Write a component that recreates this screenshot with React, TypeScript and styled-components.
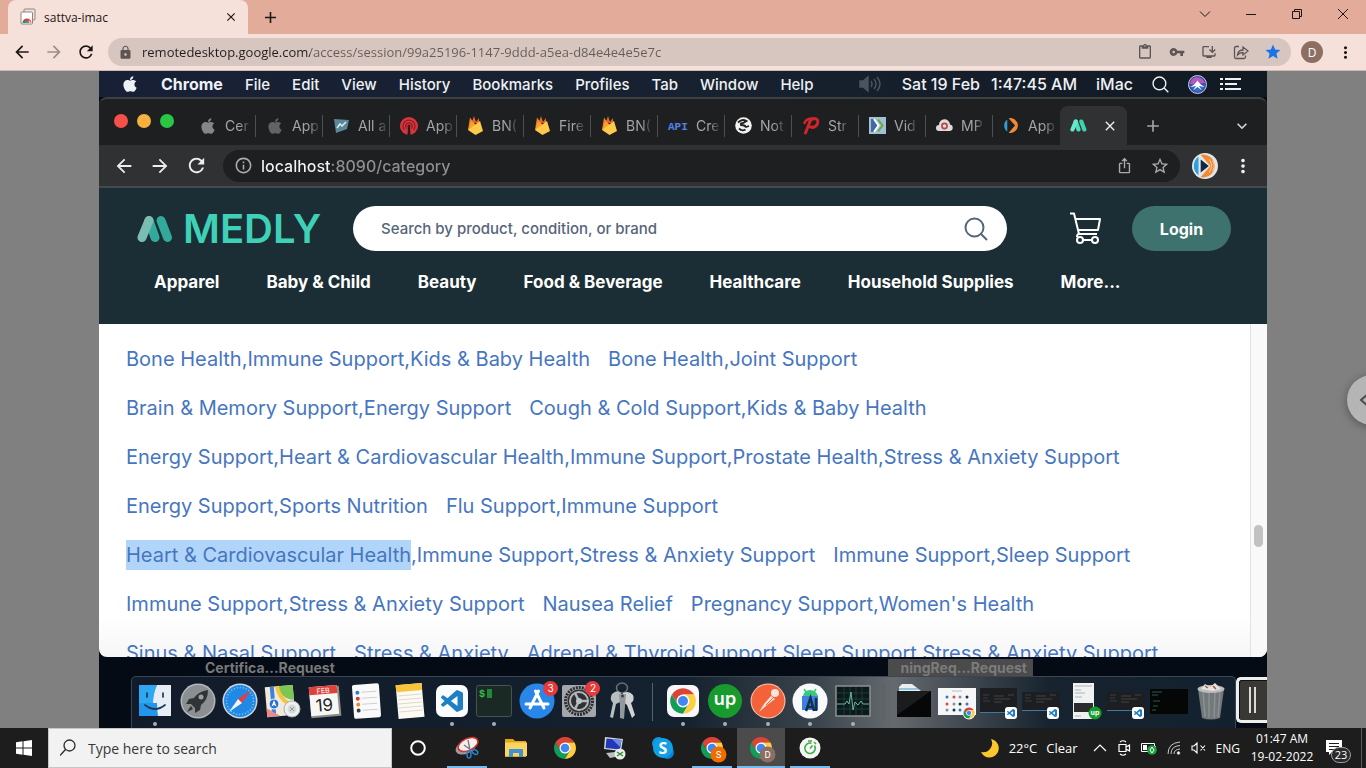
import React from "react";
import styled, { createGlobalStyle, css } from "styled-components";
import { FaApple } from "react-icons/fa";
import {
  MdArrowBack,
  MdArrowForward,
  MdRefresh,
  MdLock,
  MdStar,
  MdStarBorder,
  MdVpnKey,
  MdContentPaste,
  MdMoreVert,
  MdClose,
  MdAdd,
  MdInfoOutline,
  MdInstallDesktop,
  MdIosShare,
  MdExpandMore,
} from "react-icons/md";

const winFont = `"Open Sans", "Noto Sans", sans-serif`;
const macFont = `Inter, "Liberation Sans", sans-serif`;

const GlobalStyle = createGlobalStyle`
  * { box-sizing: border-box; }
  html, body { margin: 0; background: #808080; }
  body { font-family: ${winFont}; }
  button, input { font: inherit; color: inherit; border: 0; padding: 0; margin: 0; background: none; outline: none; }
  a { color: inherit; text-decoration: none; }
  svg { display: block; flex: none; }
`;

const Shell = styled.div`
  display: flex;
  flex-direction: column;
  height: 100vh;
  overflow: hidden;
`;

/* ---------- outer browser ---------- */

const TabStrip = styled.header`
  display: flex;
  align-items: stretch;
  height: 34px;
  padding-left: 8px;
  background: #e3ab99;
  color: #1c1716;
`;

const OuterTab = styled.div`
  display: flex;
  align-items: center;
  gap: 8px;
  width: 240px;
  padding: 0 10px 0 12px;
  border-radius: 8px 8px 0 0;
  background: #f6e1da;
  font-size: 12px;
`;

const TabName = styled.span`
  flex: 1;
`;

const IconButton = styled.button<{ $w?: number; $h?: number; $color?: string }>`
  display: flex;
  align-items: center;
  justify-content: center;
  width: ${(p) => p.$w ?? 32}px;
  height: ${(p) => p.$h ?? 32}px;
  color: ${(p) => p.$color ?? "inherit"};
  flex: none;
`;

const WindowControls = styled.div`
  display: flex;
  margin-left: auto;
`;

const OuterToolbar = styled.div`
  display: flex;
  align-items: center;
  height: 37px;
  padding: 0 4px 0 6px;
  background: #f6e1da;
  border-bottom: 1px solid #c9bab4;
  color: #1c1716;
`;

const OuterOmnibox = styled.div`
  display: flex;
  align-items: center;
  flex: 1;
  height: 28px;
  margin: 0 10px 0 6px;
  padding: 0 2px 0 10px;
  border-radius: 14px;
  background: #d7c6c0;
  color: #5c5553;
`;

const UrlField = styled.input<{ $split: number; $head: string; $tail: string }>`
  flex: 1;
  min-width: 0;
  color: transparent;
  background: linear-gradient(90deg, ${(p) => p.$head} ${(p) => p.$split}px, ${(p) => p.$tail} ${(p) => p.$split}px);
  background-clip: text;
  -webkit-background-clip: text;
`;

const OuterUrl = styled(UrlField)`
  margin-left: 9px;
  font-size: 13px;
`;

const ProfileBadge = styled.button`
  width: 22px;
  height: 22px;
  margin-right: 5px;
  border-radius: 50%;
  background: #8d6e63;
  color: #fff;
  font-size: 12px;
`;

/* ---------- remote screen ---------- */

const Stage = styled.main`
  position: relative;
  display: flex;
  flex: 1;
  min-height: 0;
  padding: 0 99px;
  overflow: hidden;
  background: #808080;
`;

const SideHandle = styled.button`
  position: absolute;
  right: -31px;
  top: 304px;
  display: flex;
  align-items: center;
  width: 50px;
  height: 50px;
  padding-left: 11px;
  border-radius: 50%;
  background: #b5b5b5;
  box-shadow: 0 2px 10px rgba(0, 0, 0, 0.35);
  color: #4c4c4c;
`;

const Remote = styled.div`
  display: flex;
  flex-direction: column;
  flex: 1;
  min-width: 0;
  background: #040b14;
  font-family: ${macFont};
  overflow: hidden;
`;

const MenuBar = styled.nav`
  display: flex;
  align-items: center;
  flex: none;
  height: 26px;
  padding: 0 26px 0 22px;
  background: linear-gradient(90deg, #182036, #182130 50%, #111a22);
  color: #eef1f5;
  font-size: 16px;
  font-weight: 500;
`;

const MenuList = styled.div`
  display: flex;
  align-items: center;
  gap: 22px;
  margin-left: 22px;
`;

const MenuItem = styled.button<{ $bold?: boolean }>`
  font-size: ${(p) => (p.$bold ? 16 : 15)}px;
  font-weight: ${(p) => (p.$bold ? 700 : 500)};
  white-space: nowrap;
`;

const MenuExtras = styled.div`
  display: flex;
  align-items: center;
  gap: 19px;
  margin-left: auto;
  white-space: nowrap;
`;

const MenuExtrasEnd = styled.div`
  display: flex;
  align-items: center;
  gap: 13px;
`;

const Clock = styled.span`
  display: flex;
  gap: 11px;
`;

const MacWindow = styled.section`
  display: flex;
  flex-direction: column;
  flex: 1;
  min-height: 0;
  border-top: 2px solid #3d4142;
  border-radius: 8px;
  overflow: hidden;
  background: #1e1f20;
`;

const MacTabs = styled.div`
  display: flex;
  align-items: flex-end;
  flex: none;
  height: 46px;
  padding: 0 9px 0 15px;
  color: #a3a5a6;
`;

const TrafficLights = styled.div`
  display: flex;
  align-items: center;
  gap: 9px;
  align-self: flex-start;
  height: 44px;
  width: 75px;
`;

const Light = styled.button<{ $color: string }>`
  width: 14px;
  height: 14px;
  border-radius: 50%;
  background: ${(p) => p.$color};
`;

const MacTab = styled.div`
  display: flex;
  align-items: center;
  flex: 0 1 67px;
  min-width: 0;
  height: 39px;
  padding-left: 10px;
  gap: 8px;
`;

const MacTabLabel = styled.span`
  white-space: nowrap;
  font-size: 14px;
  mask-image: linear-gradient(90deg, #000 60%, rgba(0, 0, 0, 0.2));
`;

const TabRule = styled.span`
  width: 1px;
  height: 22px;
  margin-left: -1px;
  margin-bottom: 8px;
  background: #4d4f50;
`;

const ActiveMacTab = styled.div`
  display: flex;
  align-items: center;
  justify-content: space-between;
  width: 67px;
  height: 39px;
  padding: 0 9px 0 10px;
  border-radius: 8px 8px 0 0;
  background: #2f3132;
  color: #f0f0f0;
`;

const NewTab = styled(IconButton)`
  margin-left: 10px;
  margin-right: auto;
`;

const MacToolbar = styled.div`
  display: flex;
  align-items: center;
  flex: none;
  height: 43px;
  padding-left: 6px;
  background: #2f3132;
  border-bottom: 2px solid #45494a;
  color: #eceeee;
`;

const MacOmnibox = styled.div`
  display: flex;
  align-items: center;
  flex: 1;
  height: 32px;
  margin: 0 12px 0 9px;
  padding: 0 2px 0 11px;
  border-radius: 16px;
  background: #1d1f20;
  color: #a9abac;
`;

const MacUrl = styled(UrlField)`
  margin-left: 8px;
  font-size: 16px;
  font-weight: 500;
`;

/* ---------- shop page ---------- */

const ShopHeader = styled.header`
  display: flex;
  flex-direction: column;
  flex: none;
  height: 136px;
  padding: 18px 36px 0 38px;
  background: #1b2e35;
  color: #fff;
`;

const HeaderRow = styled.div`
  display: flex;
  align-items: center;
`;

const Brand = styled.a`
  display: flex;
  align-items: center;
  gap: 10px;
  width: 216px;
  color: #3fd0b8;
  font-size: 40px;
  line-height: 44px;
  font-weight: 600;
`;

const SearchBox = styled.label`
  display: flex;
  align-items: center;
  flex: 1;
  height: 45px;
  padding: 0 19px 0 28px;
  border-radius: 23px;
  background: #fff;
  color: #566579;
`;

const SearchInput = styled.input`
  flex: 1;
  min-width: 0;
  font-size: 15px;
  font-weight: 500;
  &::placeholder { color: #566579; opacity: 1; }
`;

const CartButton = styled.button`
  margin: 0 30px 0 62px;
`;

const LoginButton = styled.button`
  width: 99px;
  height: 45px;
  border-radius: 23px;
  background: #3d726e;
  font-size: 16px;
  font-weight: 700;
`;

const CategoryNav = styled.nav`
  display: flex;
  gap: 47px;
  margin-top: 20px;
  padding-left: 17px;
  font-size: 17px;
  line-height: 22px;
  font-weight: 700;
  white-space: nowrap;
`;

const PageBody = styled.div`
  display: flex;
  flex: 1;
  min-height: 0;
  background: linear-gradient(#fff 88%, #f6f6f7);
`;

const LinkCloud = styled.div`
  display: flex;
  flex-wrap: wrap;
  align-content: flex-start;
  flex: 1;
  gap: 19px 18px;
  padding: 20px 26px 0 27px;
  overflow: hidden;
  color: #4676bf;
  font-size: 20px;
  line-height: 30px;
  font-weight: 400;
`;

const TopicLink = styled.a`
  white-space: nowrap;
`;

const Marked = styled.mark`
  display: inline-block;
  background: #b1d4f9;
  color: inherit;
`;

const ScrollTrack = styled.div`
  width: 17px;
  flex: none;
  padding: 201px 3px 0 3px;
  border-left: 1px solid #e2e2e2;
  background: #f9f9f9;
`;

const ScrollThumb = styled.div`
  width: 9px;
  height: 22px;
  border-radius: 5px;
  background: #c1c1c1;
`;

/* ---------- mac desktop and dock ---------- */

const DesktopStrip = styled.div`
  display: flex;
  align-items: flex-end;
  justify-content: space-between;
  flex: none;
  height: 19px;
  padding: 0 234px 0 106px;
  color: #77797b;
  font-size: 14px;
  line-height: 17px;
  font-weight: 700;
`;

const FileName = styled.span<{ $selected?: boolean }>`
  ${(p) =>
    p.$selected &&
    css`
      padding: 0 6px 0 13px;
      background: #4b4b4b;
      color: #7b7b7b;
    `}
`;

const DockRow = styled.div`
  display: flex;
  flex: none;
  height: 52px;
  padding-left: 32px;
`;

const Dock = styled.div`
  display: flex;
  flex: 1;
  padding: 0 3px 0 2px;
  border: 1px solid #3c4652;
  border-bottom: 0;
  border-radius: 5px 5px 0 0;
  background: linear-gradient(90deg, #121b2a, #14212e 50%, #3a444c 62%, #656a6e 69%, #4a5057 74%, #17242f 83%, #13202e);
`;

const DockSlot = styled.button<{ $running?: boolean }>`
  position: relative;
  display: flex;
  align-items: center;
  justify-content: center;
  flex: 1 1 0;
  min-width: 0;
  height: 47px;
  ${(p) =>
    p.$running &&
    css`
      &::after {
        content: "";
        position: absolute;
        bottom: -2px;
        left: 50%;
        width: 4px;
        height: 4px;
        margin-left: -2px;
        border-radius: 50%;
        background: #a9afb5;
      }
    `}
`;

const DockRule = styled.span`
  width: 1px;
  height: 38px;
  margin: 6px 9px 0;
  background: #57616b;
`;

const CountBadge = styled.span`
  position: absolute;
  top: 4px;
  right: 0;
  width: 15px;
  height: 15px;
  border-radius: 50%;
  background: #e5393c;
  color: #fff;
  font-size: 10px;
  line-height: 15px;
  text-align: center;
`;

const EdgePanel = styled.div`
  display: flex;
  align-items: center;
  justify-content: center;
  width: 31px;
  height: 46px;
  margin-top: 1px;
  flex: none;
  border: 3px solid #eceef0;
  border-right: 0;
  border-radius: 5px 0 0 5px;
  background: #3a3835;
  box-shadow: inset 1px 1px 0 #111;
`;

/* ---------- windows taskbar ---------- */

const Taskbar = styled.footer`
  display: flex;
  align-items: center;
  flex: none;
  height: 40px;
  background: #1d1d1d;
  color: #fff;
  font-size: 12px;
`;

const TaskSearch = styled.label`
  display: flex;
  align-items: center;
  gap: 12px;
  width: 344px;
  height: 40px;
  margin-right: 2px;
  padding: 0 11px;
  border: 1px solid #c6c6c6;
  background: #f2f2f2;
  color: #2b2b2b;
`;

const TaskSearchInput = styled.input`
  flex: 1;
  min-width: 0;
  font-size: 14px;
  &::placeholder { color: #383838; opacity: 1; }
`;

const TaskSlot = styled.button<{ $state?: "open" | "active" }>`
  position: relative;
  display: flex;
  align-items: center;
  justify-content: center;
  width: 48px;
  height: 40px;
  margin-right: 1px;
  background: ${(p) => (p.$state === "active" ? "#4b4b4b" : "none")};
  ${(p) =>
    p.$state &&
    css`
      &::after {
        content: "";
        position: absolute;
        bottom: 0;
        left: ${p.$state === "active" ? 0 : 4}px;
        right: ${p.$state === "active" ? 0 : 4}px;
        height: 2px;
        background: #76b9ed;
      }
    `}
`;

const Tray = styled.div`
  display: flex;
  align-items: center;
  margin-left: auto;
  height: 40px;
  padding-right: 4px;
`;

const Weather = styled.button`
  display: flex;
  align-items: center;
  gap: 9px;
  margin-right: 15px;
  font-size: 13px;
`;

const TrayIcons = styled.div`
  display: flex;
  align-items: center;
  gap: 10px;
`;

const TrayClock = styled.time`
  width: 66px;
  margin: 0 10px 0 9px;
  font-size: 12px;
  line-height: 18px;
  text-align: center;
`;

const Notice = styled.button`
  position: relative;
  width: 32px;
  height: 40px;
`;

const NoticeCount = styled.span`
  position: absolute;
  left: 6px;
  top: 19px;
  width: 20px;
  height: 16px;
  border: 1px solid #9c9c9c;
  border-radius: 8px;
  background: #2a2a2a;
  font-size: 11px;
  line-height: 14px;
  text-align: center;
`;

const ShowDesktop = styled.span`
  width: 1px;
  height: 40px;
  margin-left: 4px;
  background: #5a5a5a;
`;

/* ---------- drawings ---------- */

const ChromeLogo = ({ size = 22, badge, badgeColor }: { size?: number; badge?: string; badgeColor?: string }) => (
  <svg width={size} height={size} viewBox="0 0 48 48" overflow="visible">
    <path fill="#db4437" d="M24 24 24 13H43.05A22 22 0 0 0 4.95 13L14.47 29.5z" />
    <path fill="#0f9d58" d="M4.95 13A22 22 0 0 0 24 46L33.53 29.5H14.47z" />
    <path fill="#ffcd40" d="M43.05 13A22 22 0 0 1 24 46L33.53 29.5 24 13z" />
    <circle cx="24" cy="24" r="11" fill="#fff" />
    <circle cx="24" cy="24" r="8.6" fill="#4285f4" />
    {badge && (
      <>
        <circle cx="37" cy="37" r="16" fill={badgeColor} />
        <text x="37" y="44" fill="#fff" fontSize="19" textAnchor="middle" fontFamily="Roboto, sans-serif">{badge}</text>
      </>
    )}
  </svg>
);

const CodeMark = ({ size = 24 }: { size?: number }) => (
  <svg width={size} height={size} viewBox="0 0 24 24">
    <path
      fill="#1f7fc4"
      d="M23.15 2.587L18.21.21a1.494 1.494 0 0 0-1.705.29l-9.46 8.63-4.12-3.128a.999.999 0 0 0-1.276.057L.327 7.261A1 1 0 0 0 .326 8.74L3.899 12 .326 15.26a1 1 0 0 0 .001 1.479L1.65 17.94a.999.999 0 0 0 1.276.057l4.12-3.128 9.46 8.63a1.492 1.492 0 0 0 1.704.29l4.942-2.377A1.5 1.5 0 0 0 24 20.06V3.939a1.5 1.5 0 0 0-.85-1.352zm-5.146 14.861L10.826 12l7.178-5.448v10.896z"
    />
  </svg>
);

const MedlyMark = ({ w, h, bright }: { w: number; h: number; bright?: boolean }) => (
  <svg width={w} height={h} viewBox="0 0 36 28" strokeLinecap="round" strokeWidth="9">
    <path d="M24 5.500 30.500 22.500" stroke={bright ? "#3fd3ad" : "#33a99b"} />
    <path d="M12 5.500 18 22.500" stroke={bright ? "#4be0bb" : "#33a99b"} />
    <path d="M12 5.500 5 22.500" stroke={bright ? "#6be6c8" : "#7bbdb2"} />
  </svg>
);

const Firebase = () => (
  <svg width="17" height="19" viewBox="0 0 17 19">
    <path d="M1 14 3 1.5 7 7z" fill="#f58220" />
    <path d="M1 14 5 4 10 11z" fill="#f9a12e" />
    <path d="M5 6 7 0 9 6 12 2 12 8z" fill="#e8672a" />
    <path d="M1 14 13 5 16 15 8.500 19z" fill="#ffca4a" />
  </svg>
);

const PlayMark = ({ size = 17, ring }: { size?: number; ring?: boolean }) => (
  <svg width={size} height={size} viewBox="0 0 24 24">
    {ring && <circle cx="12" cy="12" r="12" fill="#dfe7ec" />}
    <path d="M8 1.800A10.500 10.500 0 1 1 8 22.200L17 12z" fill="#f28a35" />
    <path d="M6 3.500A10.500 10.500 0 0 0 6 20.500z" fill="#2f9fd8" />
    <path d="M8 6 15.500 12 8 18z" fill={ring ? "#16263f" : "#1e1f20"} />
    {ring && <path d="M16 6q4 6 0 12M19 7q3 5 0 10" stroke="#ffc58f" fill="none" />}
  </svg>
);

const SearchGlyph = ({ size, width = 2 }: { size: number; width?: number }) => (
  <svg width={size} height={size} viewBox="0 0 24 24" fill="none" stroke="currentColor" strokeWidth={width}>
    <circle cx="10.500" cy="10.500" r="9" />
    <path d="M17 17 23 23" />
  </svg>
);

const tabIcons: { label: string; icon: React.ReactNode }[] = [
  { label: "Cer", icon: <FaApple size={18} color="#858687" /> },
  { label: "App", icon: <FaApple size={18} color="#626364" /> },
  {
    label: "All a",
    icon: (
      <svg width="17" height="17" viewBox="0 0 17 17">
        <path d="M1 2 16 3 14 12 3 16z" fill="#5b8798" />
        <path d="M4 11 7 7 9 9 13 5" stroke="#d9edf2" strokeWidth="1.500" fill="none" />
      </svg>
    ),
  },
  {
    label: "App",
    icon: (
      <svg width="18" height="18" viewBox="0 0 18 18">
        <circle cx="9" cy="9" r="9" fill="#d8363c" />
        <path d="M4.500 13a6 6 0 1 1 9 0M6.700 11.500a3.300 3.300 0 1 1 4.600 0" stroke="#8f1c25" strokeWidth="1.300" fill="none" />
        <path d="M7.500 18 8 10h2l.500 8z" fill="#1e1f20" />
        <circle cx="9" cy="9" r="1.600" fill="#5b0f18" />
      </svg>
    ),
  },
  { label: "BN(", icon: <Firebase /> },
  { label: "Fire", icon: <Firebase /> },
  { label: "BN(", icon: <Firebase /> },
  {
    label: "Cre",
    icon: (
      <svg width="20" height="16" viewBox="0 0 20 16">
        <text x="0" y="12" fontFamily="Liberation Mono, monospace" fontSize="11" fontWeight="700" fill="#5580e6">API</text>
      </svg>
    ),
  },
  {
    label: "Not",
    icon: (
      <svg width="17" height="17" viewBox="0 0 17 17">
        <circle cx="8.500" cy="8.500" r="8.300" fill="#f2f2f2" />
        <path d="M3 5.500Q7 1.500 11.500 4L8 6Q5 6 6 8 10 8 11 10L14 9M4 11.500Q7 14.500 10.500 12.500" stroke="#222" strokeWidth="1.800" fill="none" />
      </svg>
    ),
  },
  {
    label: "Str",
    icon: (
      <svg width="18" height="19" viewBox="0 0 18 19" fill="none" stroke="#d0252b" strokeWidth="3" strokeLinecap="round">
        <path d="M3.500 17 7 8Q8.500 2.500 12.500 2.500 17 3 15.500 7.500 13.500 12.500 8.500 11" />
        <path d="M2.500 7Q4 2.500 11 2.500" strokeWidth="2.500" />
      </svg>
    ),
  },
  {
    label: "Vid",
    icon: (
      <svg width="17" height="17" viewBox="0 0 17 17">
        <path d="M0 0H17V17H0z" fill="#9fc0d6" />
        <path d="M2 2H6L10 8.500 6 15H2z" fill="#4668a0" />
        <path d="M5 2 9.500 8.500 5 15" stroke="#fff" strokeWidth="2" fill="none" />
        <path d="M9 2.500 13.500 8.500 9 14.500" stroke="#6ea83c" strokeWidth="2" fill="none" />
      </svg>
    ),
  },
  {
    label: "MP",
    icon: (
      <svg width="17" height="13" viewBox="0 0 17 13">
        <path d="M3 12a3 3 0 0 1 0-6 5.500 5.500 0 0 1 11-.5A3.300 3.300 0 0 1 14 12z" fill="#dcdcdc" />
        <circle cx="8.500" cy="7" r="2.600" stroke="#c2403c" strokeWidth="1.600" fill="none" />
      </svg>
    ),
  },
  { label: "App", icon: <PlayMark /> },
];

const Sheet = ({ rows }: { rows: string[] }) => (
  <>
    {rows.map((c, i) => (
      <g key={i}>
        <circle cx="9" cy={9 + i * 6} r="2" fill={c} />
        <path d={`M13 ${9 + i * 6}H28`} stroke="#d0d0d0" />
      </g>
    ))}
  </>
);

const EditorThumb = ({ wide }: { wide?: boolean }) => (
  <svg width="38" height="38" viewBox="0 0 38 38">
    <path d={wide ? "M0 6H37V31H0z" : "M0 10H38V29H0z"} fill="#1c1e21" />
    <path d={wide ? "M0 30.500H26" : "M0 28.500H26"} stroke="#3d7ba6" />
    <path d="M3 13H9M3 16H8M3 19H10" stroke="#393d42" />
    <path d="M14 14H24M14 17H30M14 20H22M28 13H34" stroke="#45423c" />
    <rect x="25" y="25" width="12" height="12" rx="3" fill="#fff" />
    <g transform="translate(27 27)"><CodeMark size={8} /></g>
  </svg>
);

type DockEntry = { name: string; running?: boolean; badge?: string; art: React.ReactNode };

const dockLeft: DockEntry[] = [
  {
    name: "Finder", running: true,
    art: (
      <svg width="34" height="34" viewBox="0 0 34 34">
        <path d="M1 1H33V32H1z" fill="#e6edf5" />
        <path d="M1 1H19Q15 10 15 19H19Q19 26 20 32H1z" fill="#2196ec" />
        <path d="M1 1H19Q15 10 15 19H1z" fill="#35b4f5" opacity=".6" />
        <path d="M9 9v4M25 9v4M7 21Q17 29 27 21" stroke="#1d3a55" strokeWidth="1.700" fill="none" strokeLinecap="round" />
      </svg>
    ),
  },
  {
    name: "Launchpad",
    art: (
      <svg width="36" height="36" viewBox="0 0 36 36">
        <circle cx="18" cy="18" r="17.500" fill="#b3b7ba" />
        <circle cx="18" cy="18" r="16" fill="#8b8f92" />
        <path d="M28 7Q19 8 14 15L9 16 6 21 11 21 15 25 15 30 20 27 21 22Q28 17 28 7z" fill="#2f3437" />
        <circle cx="21" cy="14" r="2.500" fill="#9b9fa3" />
        <path d="M11 23 7 29 13 26z" fill="#2f3437" />
      </svg>
    ),
  },
  {
    name: "Safari",
    art: (
      <svg width="36" height="36" viewBox="0 0 36 36">
        <circle cx="18" cy="18" r="17.500" fill="#c9d6e0" />
        <circle cx="18" cy="18" r="16" fill="#2089e6" />
        <circle cx="18" cy="18" r="13.500" fill="none" stroke="#8cc8f7" strokeWidth="1.500" strokeDasharray="1 2" />
        <path d="M29 7 16 16 20 20z" fill="#ec3b3b" />
        <path d="M7 29 16 16 20 20z" fill="#f3f3f3" />
      </svg>
    ),
  },
  {
    name: "Maps",
    art: (
      <svg width="38" height="36" viewBox="0 0 38 36">
        <g transform="rotate(-5 18 18)">
          <path d="M3 3H31V33H3z" fill="#f0ead8" />
          <path d="M16 3H31V18Q18 16 16 3z" fill="#7cc653" />
          <path d="M10 3V33" stroke="#3d82e0" strokeWidth="4" />
          <path d="M15 3Q18 20 31 24" stroke="#f6c445" strokeWidth="4" fill="none" />
          <path d="M3 24 16 33H3z" fill="#e98b8b" />
        </g>
        <circle cx="11" cy="21" r="5" fill="#2b72cf" stroke="#fff" />
        <path d="M8.500 23.500 11 17 13.500 23.500 11 22z" fill="#fff" />
        <circle cx="29" cy="26" r="8" fill="#eef1f1" stroke="#a6aeb0" />
        <circle cx="29" cy="26" r="4.500" fill="#d6dad9" />
        <path d="M27 24 31 28M31 24 27 28" stroke="#8d9697" />
      </svg>
    ),
  },
  {
    name: "Calendar",
    art: (
      <svg width="36" height="36" viewBox="0 0 36 36">
        <g transform="rotate(-5 18 18)">
          <path d="M3 4H33V34H3z" fill="#8d8d8a" />
          <path d="M3 3H31V32H3z" fill="#f7f7f5" />
          <path d="M3 3H31V11H3z" fill="#e0403a" />
          <text x="17" y="10" fontSize="7" fill="#fff" textAnchor="middle" fontFamily="Inter, sans-serif">FEB</text>
          <text x="17" y="28" fontSize="17" fill="#222" textAnchor="middle" fontFamily="Inter, sans-serif">19</text>
        </g>
      </svg>
    ),
  },
  {
    name: "Reminders",
    art: (
      <svg width="36" height="36" viewBox="0 0 36 36">
        <g transform="rotate(-4 18 18)">
          <rect x="4" y="1" width="27" height="34" rx="2" fill="#fafafa" />
          <Sheet rows={["#3477e0", "#d53a34", "#e88b2b", "#3f3f3f"]} />
        </g>
      </svg>
    ),
  },
  {
    name: "Notes",
    art: (
      <svg width="36" height="38" viewBox="0 0 36 38">
        <g transform="rotate(-5 18 18)">
          <path d="M5 2H31V36H5z" fill="#fcfaf3" />
          <path d="M5 2H31V9H5z" fill="#f8c43a" />
          <path d="M6 13H30M6 17H30M6 21H30M6 25H30M6 29H30" stroke="#dcdad2" />
        </g>
      </svg>
    ),
  },
  {
    name: "Code", running: true,
    art: (
      <svg width="34" height="34" viewBox="0 0 34 34">
        <rect x="1" y="1" width="32" height="32" rx="7" fill="#fbfcfd" />
        <g transform="translate(6 6)"><CodeMark size={22} /></g>
      </svg>
    ),
  },
  {
    name: "Terminal", running: true,
    art: (
      <svg width="36" height="34" viewBox="0 0 36 34">
        <rect x=".5" y="1.500" width="35" height="31" rx="2" fill="#1b2924" stroke="#49524f" />
        <text x="3" y="13" fontSize="10" fontWeight="700" fill="#36c14c" fontFamily="Liberation Mono, monospace">$</text>
        <path d="M11 5H16V14H11z" fill="#1f8a35" />
      </svg>
    ),
  },
  {
    name: "App Store", badge: "3",
    art: (
      <svg width="36" height="36" viewBox="0 0 36 36">
        <circle cx="18" cy="18" r="17.500" fill="#2a87ea" />
        <path d="M19.500 8 11 25M16.500 8 25 25M7 21H21M24 21H29" stroke="#fff" strokeWidth="3" strokeLinecap="round" />
      </svg>
    ),
  },
  {
    name: "Preferences", badge: "2",
    art: (
      <svg width="36" height="36" viewBox="0 0 36 36">
        <rect x="1" y="2" width="34" height="32" rx="2" fill="#a4a7a9" />
        <circle cx="18" cy="18" r="13.500" fill="none" stroke="#2c2e30" strokeWidth="3" strokeDasharray="2 1" />
        <circle cx="18" cy="18" r="11.500" fill="#2f3234" />
        <circle cx="18" cy="18" r="9" fill="none" stroke="#b4b7b9" strokeWidth="2" />
        <path d="M18 18 14 10M18 18 14 26M18 18H27" stroke="#b4b7b9" strokeWidth="2.500" />
        <circle cx="18" cy="18" r="3" fill="#c0c3c5" />
      </svg>
    ),
  },
  {
    name: "Keychain",
    art: (
      <svg width="30" height="38" viewBox="0 0 30 38">
        <ellipse cx="15" cy="6" rx="5.500" ry="5" fill="none" stroke="#6a7073" strokeWidth="1.500" />
        <path d="M5 12Q10 7 14 11L13 20 9 22 6 36 3 35 6 21Q2 17 5 12z" fill="#b9bec0" />
        <path d="M16 11Q22 8 26 13 28 18 24 21L28 33 25 36 20 23 15 19z" fill="#cfd3d4" />
        <path d="M12 12H19L18 24 17 37 13 36 13 24z" fill="#92989b" />
        <circle cx="15.500" cy="14" r="1.500" fill="#3c4245" />
      </svg>
    ),
  },
];

const dockMiddle: DockEntry[] = [
  {
    name: "Chrome", running: true,
    art: (
      <svg width="34" height="34" viewBox="0 0 34 34">
        <rect x="1" y="1" width="32" height="32" rx="7" fill="#f8f8f8" />
        <g transform="translate(3 3)"><ChromeLogo size={28} /></g>
      </svg>
    ),
  },
  {
    name: "Upwork", running: true,
    art: (
      <svg width="36" height="36" viewBox="0 0 36 36">
        <circle cx="18" cy="18" r="17" fill="#189b2d" />
        <text x="18" y="22" fontSize="18" fontWeight="600" fill="#fff" textAnchor="middle" fontFamily="Inter, sans-serif">up</text>
      </svg>
    ),
  },
  {
    name: "Postman", running: true,
    art: (
      <svg width="36" height="36" viewBox="0 0 36 36">
        <circle cx="18" cy="18" r="17.500" fill="#f6c7b4" />
        <circle cx="18" cy="18" r="16.500" fill="#f4623a" />
        <circle cx="25" cy="10" r="4" fill="#fbe4da" />
        <path d="M21 13 25 16 17 22 9 29 14 21z" fill="#fbe4da" />
        <path d="M24 14 16 22" stroke="#f4623a" />
      </svg>
    ),
  },
  {
    name: "Android Studio", running: true,
    art: (
      <svg width="36" height="36" viewBox="0 0 36 36">
        <circle cx="18" cy="18" r="17.500" fill="#f8f9fa" />
        <path d="M10 13H26V27H10z" fill="#3d7fe6" />
        <path d="M11 13Q12 7 18 7T26 13z" fill="#3ac97c" />
        <path d="M12 6 14 9M24 6 22 9" stroke="#3ac97c" strokeWidth="1.500" />
        <path d="M14 28 18.500 15 22 28M24 15V28M16 24H21" stroke="#14304a" strokeWidth="2.500" fill="none" />
      </svg>
    ),
  },
  {
    name: "Activity Monitor", running: true,
    art: (
      <svg width="36" height="34" viewBox="0 0 36 34">
        <rect x="1" y="2" width="34" height="30" fill="#0d1a1b" stroke="#8b9193" strokeWidth="1.500" />
        <path d="M2 9H34M2 15H34M2 25H34M9 3V31M15 3V31M21 3V31M27 3V31" stroke="#1c3a38" />
        <path d="M2 20H10L12 17 14 20 16 8 18 26 20 18 23 21 26 17 28 20H34" stroke="#6bb3a1" fill="none" />
      </svg>
    ),
  },
];

const dockRight: DockEntry[] = [
  {
    name: "Folder",
    art: (
      <svg width="36" height="36" viewBox="0 0 36 36">
        <path d="M3 4 6 1H16L25 8H3z" fill="#e9eef1" />
        <path d="M3 6H22" stroke="#3f9fd6" />
        <path d="M1 8H35V34H1z" fill="#060708" />
        <path d="M1 8H35L1 32z" fill="#1a1c1e" />
      </svg>
    ),
  },
  {
    name: "Browser window",
    art: (
      <svg width="38" height="38" viewBox="0 0 38 38" overflow="visible">
        <path d="M0 6H38V33H0z" fill="#f5f6f8" />
        <path d="M14 9H24" stroke="#b8bcc2" />
        {[15, 22, 28].map((y, r) =>
          [9, 16, 22, 29].map((x, c) => (
            <circle key={`${x}-${y}`} cx={x} cy={y} r="1.500" fill={["#3a75c4", "#d8493f", "#8a8f96", "#2b2f36"][(r + c) % 4]} />
          )),
        )}
        <circle cx="31" cy="31" r="6.500" fill="#f5f6f8" />
        <g transform="translate(25 25)"><ChromeLogo size={12} /></g>
      </svg>
    ),
  },
  { name: "Editor one", art: <EditorThumb wide /> },
  { name: "Editor two", art: <EditorThumb /> },
  {
    name: "Messages window",
    art: (
      <svg width="38" height="38" viewBox="0 0 38 38" overflow="visible">
        <path d="M8 1H29V37H8z" fill="#f0f1f1" />
        <path d="M10 4H27M10 8H16M10 11H20M10 15H17M10 34H16" stroke="#aeb2b3" />
        <path d="M9 21H28V30H9z" fill="#2c2c2e" />
        <circle cx="30" cy="31" r="6.500" fill="#189b2d" />
        <text x="30" y="33" fontSize="7" fontWeight="700" fill="#fff" textAnchor="middle" fontFamily="Inter, sans-serif">up</text>
      </svg>
    ),
  },
  { name: "Editor three", art: <EditorThumb /> },
  {
    name: "Terminal window",
    art: (
      <svg width="38" height="38" viewBox="0 0 38 38">
        <path d="M0 7H38V32H0z" fill="#050606" />
        <path d="M2 10H12M2 13H8M3 19H10M3 24H8M2 28H6" stroke="#2f5a4c" />
      </svg>
    ),
  },
  {
    name: "Bin",
    art: (
      <svg width="30" height="38" viewBox="0 0 30 38">
        <path d="M2 7H28L24 36Q15 39 6 36z" fill="#73787b" />
        <path d="M7 9 9 35M13 10V36M19 10 18 36M24 9 22 35" stroke="#8b9093" strokeWidth="1.500" />
        <ellipse cx="15" cy="7" rx="13.500" ry="4" fill="#b9bcbd" />
        <path d="M5 7 9 2 14 5 19 1 25 7 17 9z" fill="#e8e3de" />
        <path d="M9 4 12 6M17 4 20 7" stroke="#a65545" strokeWidth="1.500" />
      </svg>
    ),
  },
];

const DockGroup = ({ entries }: { entries: DockEntry[] }) => (
  <>
    {entries.map((e) => (
      <DockSlot key={e.name} aria-label={e.name} $running={e.running}>
        {e.art}
        {e.badge && <CountBadge>{e.badge}</CountBadge>}
      </DockSlot>
    ))}
  </>
);

const topics = [
  "Bone Health,Immune Support,Kids & Baby Health",
  "Bone Health,Joint Support",
  "Brain & Memory Support,Energy Support",
  "Cough & Cold Support,Kids & Baby Health",
  "Energy Support,Heart & Cardiovascular Health,Immune Support,Prostate Health,Stress & Anxiety Support",
  "Energy Support,Sports Nutrition",
  "Flu Support,Immune Support",
  "Heart & Cardiovascular Health,Immune Support,Stress & Anxiety Support",
  "Immune Support,Sleep Support",
  "Immune Support,Stress & Anxiety Support",
  "Nausea Relief",
  "Pregnancy Support,Women's Health",
  "Sinus & Nasal Support",
  "Stress & Anxiety",
  "Adrenal & Thyroid Support Sleep Support Stress & Anxiety Support",
];
const markedPrefix = "Heart & Cardiovascular Health";

const OuterBrowser = () => (
  <>
    <TabStrip>
      <OuterTab>
        <svg width="16" height="18" viewBox="0 0 16 18">
          <rect x="4" y="1" width="11" height="11" rx="1" fill="#f6e1da" stroke="#8b8583" />
          <rect x="1" y="4" width="11.500" height="12" rx="1" fill="#fff" stroke="#8b8583" />
          <path d="M2.500 15a4.500 4.500 0 0 1 9 0z" fill="#db4437" />
          <path d="M2.500 15 4.500 11.500 6 15z" fill="#0f9d58" />
          <path d="M9 12 11.500 15H8z" fill="#ffcd40" />
          <path d="M5 15a2 2 0 0 1 4 0z" fill="#4285f4" />
        </svg>
        <TabName>sattva-imac</TabName>
        <MdClose size={14} />
      </OuterTab>
      <IconButton aria-label="New tab" $w={44} $h={34}><MdAdd size={19} /></IconButton>
      <WindowControls>
        <IconButton aria-label="Search tabs" $w={46} $h={28}>
          <svg width="12" height="12" viewBox="0 0 12 12" fill="none" stroke="currentColor"><path d="M1 3.500 6 8.500 11 3.500" /></svg>
        </IconButton>
        <IconButton aria-label="Minimise" $w={46} $h={28}>
          <svg width="12" height="12" viewBox="0 0 12 12" stroke="currentColor"><path d="M1 6.500H11" /></svg>
        </IconButton>
        <IconButton aria-label="Restore" $w={46} $h={28}>
          <svg width="12" height="12" viewBox="0 0 12 12" fill="none" stroke="currentColor"><path d="M1.500 3.500H8.500V10.500H1.500zM3.500 3V1.500H10.500V8.500H9" /></svg>
        </IconButton>
        <IconButton aria-label="Close" $w={46} $h={28}>
          <svg width="12" height="12" viewBox="0 0 12 12" stroke="currentColor"><path d="M1 1 11 11M11 1 1 11" /></svg>
        </IconButton>
      </WindowControls>
    </TabStrip>
    <OuterToolbar>
      <IconButton aria-label="Back"><MdArrowBack size={20} /></IconButton>
      <IconButton aria-label="Forward" $color="#9c8e89"><MdArrowForward size={20} /></IconButton>
      <IconButton aria-label="Reload"><MdRefresh size={20} /></IconButton>
      <OuterOmnibox>
        <MdLock size={15} />
        <OuterUrl
          aria-label="Address"
          defaultValue="remotedesktop.google.com/access/session/99a25196-1147-9ddd-a5ea-d84e4e4e5e7c"
          $split={168}
          $head="#231e1d"
          $tail="#665c59"
        />
        <IconButton aria-label="Clipboard"><MdContentPaste size={16} /></IconButton>
        <IconButton aria-label="Passwords"><MdVpnKey size={16} /></IconButton>
        <IconButton aria-label="Install"><MdInstallDesktop size={16} /></IconButton>
        <IconButton aria-label="Share">
          <svg width="16" height="16" viewBox="0 0 16 16" fill="none" stroke="currentColor" strokeWidth="1.300">
            <path d="M6 2.500H3Q1.500 2.500 1.500 4V13Q1.500 14.500 3 14.500H11Q12.500 14.500 12.500 13V11.500" />
            <path d="M4.500 11Q5 6 10 6V3L15 7 10 11V8.500Q6.500 8.500 4.500 11z" />
          </svg>
        </IconButton>
        <IconButton aria-label="Bookmark" $color="#1a73e8"><MdStar size={18} /></IconButton>
      </OuterOmnibox>
      <ProfileBadge>D</ProfileBadge>
      <IconButton aria-label="Menu" $w={34}><MdMoreVert size={19} /></IconButton>
    </OuterToolbar>
  </>
);

const MacMenuBar = () => (
  <MenuBar>
    <FaApple size={18} />
    <MenuList>
      <MenuItem $bold>Chrome</MenuItem>
      {["File", "Edit", "View", "History", "Bookmarks", "Profiles", "Tab", "Window", "Help"].map((m) => (
        <MenuItem key={m}>{m}</MenuItem>
      ))}
    </MenuList>
    <MenuExtras>
      <svg width="24" height="18" viewBox="0 0 24 18" fill="none" stroke="#4a535f" strokeWidth="1.500">
        <path d="M1 6H4L9 2V16L4 12H1z" fill="#4a535f" />
        <path d="M12 6q2 3 0 6M15 4q4 5 0 10M18 2q6 7 0 14" />
      </svg>
      <Clock><span>Sat 19 Feb</span><span>1:47:45 AM</span></Clock>
      <span>iMac</span>
      <SearchGlyph size={17} />
      <MenuExtrasEnd>
        <svg width="19" height="19" viewBox="0 0 19 19">
          <circle cx="9.500" cy="9.500" r="9" fill="#3a4fb0" stroke="#c9cdd6" />
          <path d="M2 9Q3 3 9 2 15 3 17 8L9 9z" fill="#b558c0" />
          <path d="M2 11Q6 16 9 17 14 16 17 11L10 9z" fill="#2f6fc4" />
          <path d="M2.500 12Q7 10 9.500 5.500 12 10 16.500 12L11 11 14 15.500 9.500 12 5 15.500 8 11z" fill="#fff" />
        </svg>
        <svg width="21" height="14" viewBox="0 0 21 14" stroke="currentColor" strokeWidth="2">
          <path d="M0 2H3M5 2H21M0 7H3M5 7H17M0 12H3M5 12H21" />
        </svg>
      </MenuExtrasEnd>
    </MenuExtras>
  </MenuBar>
);

const MacBrowserChrome = () => (
  <>
    <MacTabs>
      <TrafficLights>
        <Light aria-label="Close window" $color="#f94f4b" />
        <Light aria-label="Minimise window" $color="#f8b140" />
        <Light aria-label="Zoom window" $color="#2bc644" />
      </TrafficLights>
      {tabIcons.map((t, i) => (
        <React.Fragment key={i}>
          {i > 0 && <TabRule />}
          <MacTab>
            {t.icon}
            <MacTabLabel>{t.label}</MacTabLabel>
          </MacTab>
        </React.Fragment>
      ))}
      <ActiveMacTab>
        <MedlyMark w={17} h={13} bright />
        <MdClose size={16} />
      </ActiveMacTab>
      <NewTab aria-label="New tab" $h={39}><MdAdd size={20} /></NewTab>
      <IconButton aria-label="Tab list" $h={39} $color="#d0d2d2"><MdExpandMore size={20} /></IconButton>
    </MacTabs>
    <MacToolbar>
      <IconButton aria-label="Page back" $w={37}><MdArrowBack size={22} /></IconButton>
      <IconButton aria-label="Page forward" $w={36}><MdArrowForward size={22} /></IconButton>
      <IconButton aria-label="Page reload" $w={36}><MdRefresh size={23} /></IconButton>
      <MacOmnibox>
        <MdInfoOutline size={19} />
        <MacUrl aria-label="Page address" defaultValue="localhost:8090/category" $split={69} $head="#f3f5f5" $tail="#8f9293" />
        <IconButton aria-label="Share page" $w={36}><MdIosShare size={17} /></IconButton>
        <IconButton aria-label="Bookmark page" $w={36}><MdStarBorder size={20} /></IconButton>
      </MacOmnibox>
      <PlayMark size={26} ring />
      <IconButton aria-label="Page menu" $w={49}><MdMoreVert size={22} /></IconButton>
    </MacToolbar>
  </>
);

const Shop = () => (
  <>
    <ShopHeader>
      <HeaderRow>
        <Brand href="#home"><MedlyMark w={36} h={28} />MEDLY</Brand>
        <SearchBox>
          <SearchInput aria-label="Search products" placeholder="Search by product, condition, or brand" />
          <SearchGlyph size={24} />
        </SearchBox>
        <CartButton aria-label="Cart">
          <svg width="33" height="33" viewBox="0 0 33 33" fill="none" stroke="#fff" strokeWidth="2" strokeLinejoin="round">
            <path d="M1 1.500H5L10 22H28M6.500 7H31L29 18H9.500M10 22Q8 22 8 25" />
            <circle cx="11" cy="28" r="3" />
            <circle cx="26" cy="28" r="3" />
            <path d="M14 28H23" />
          </svg>
        </CartButton>
        <LoginButton>Login</LoginButton>
      </HeaderRow>
      <CategoryNav>
        {["Apparel", "Baby & Child", "Beauty", "Food & Beverage", "Healthcare", "Household Supplies", "More..."].map((c) => (
          <a key={c} href="#category">{c}</a>
        ))}
      </CategoryNav>
    </ShopHeader>
    <PageBody>
      <LinkCloud>
        {topics.map((t) => (
          <TopicLink key={t} href="#topic">
            {t.startsWith(markedPrefix) ? (
              <>
                <Marked>{markedPrefix}</Marked>
                {t.slice(markedPrefix.length)}
              </>
            ) : (
              t
            )}
          </TopicLink>
        ))}
      </LinkCloud>
      <ScrollTrack><ScrollThumb /></ScrollTrack>
    </PageBody>
  </>
);

const WindowsTaskbar = () => (
  <Taskbar>
    <IconButton aria-label="Start" $w={48} $h={40}>
      <svg width="16" height="16" viewBox="0 0 16 16" fill="#fff"><path d="M0 2.200 6.500 1.300V7.500H0zM7.500 1.200 16 0V7.500H7.500zM0 8.500H6.500V14.700L0 13.800zM7.500 8.500H16V16L7.500 14.800z" /></svg>
    </IconButton>
    <TaskSearch>
      <svg width="16" height="18" viewBox="0 0 16 18" fill="none" stroke="currentColor" strokeWidth="1.300">
        <circle cx="9.500" cy="6.500" r="5.500" />
        <path d="M5.500 10.500 0 16.500" />
      </svg>
      <TaskSearchInput aria-label="Search this PC" placeholder="Type here to search" />
    </TaskSearch>
    <TaskSlot aria-label="Cortana">
      <svg width="16" height="16" viewBox="0 0 16 16"><circle cx="8" cy="8" r="6.800" fill="none" stroke="#fff" strokeWidth="2" /></svg>
    </TaskSlot>
    <TaskSlot aria-label="Snipping tool" $state="open">
      <svg width="26" height="24" viewBox="0 0 26 24">
        <ellipse cx="12" cy="11" rx="11" ry="6.500" transform="rotate(-25 12 11)" fill="#9b9b9b" />
        <ellipse cx="14" cy="8.500" rx="10.500" ry="6" transform="rotate(-25 14 8.500)" fill="#f2efee" stroke="#d3302c" strokeWidth="1.500" />
        <path d="M14 4 16 14M10 9 17 14" stroke="#777" strokeWidth="1.300" />
        <ellipse cx="15" cy="18.500" rx="2" ry="3.500" fill="none" stroke="#2a7fc9" strokeWidth="1.500" />
        <ellipse cx="21" cy="16" rx="3" ry="2" transform="rotate(30 21 16)" fill="none" stroke="#2a7fc9" strokeWidth="1.500" />
      </svg>
    </TaskSlot>
    <TaskSlot aria-label="File Explorer">
      <svg width="22" height="20" viewBox="0 0 22 20">
        <path d="M0 1H8L10 3H21V19H0z" fill="#e5a614" />
        <path d="M0 4.500H22V18H0z" fill="#fcd462" />
        <path d="M4 11H18V19H14V15H8V19H4z" fill="#3f93d2" />
      </svg>
    </TaskSlot>
    <TaskSlot aria-label="Chrome"><ChromeLogo size={24} /></TaskSlot>
    <TaskSlot aria-label="Remote Desktop">
      <svg width="24" height="24" viewBox="0 0 24 24">
        <path d="M3 1 21 3 19 15 2 13z" fill="#d4d9de" />
        <path d="M4.500 2.500 19.500 4 18 13.500 3.500 12z" fill="#2138b8" />
        <path d="M10 3 19.500 4 18 11z" fill="#6d8be6" />
        <path d="M4 17 13 16 18 20 8 22z" fill="#b9bec4" />
        <circle cx="18" cy="18" r="5.500" fill="#e9eee9" />
        <path d="M15 16 18 18 15 20M21 16 18 18 21 20" stroke="#3c8f3a" strokeWidth="1.500" fill="none" />
      </svg>
    </TaskSlot>
    <TaskSlot aria-label="Skype">
      <svg width="22" height="22" viewBox="0 0 22 22">
        <circle cx="6.500" cy="6.500" r="6.500" fill="#1295dc" />
        <circle cx="15.500" cy="15.500" r="6.500" fill="#0f7fd0" />
        <circle cx="11" cy="11" r="10" fill="#12a0e4" />
        <text x="11" y="17" fontSize="16" fontWeight="700" fill="#fff" textAnchor="middle" fontFamily="Open Sans, sans-serif">S</text>
      </svg>
    </TaskSlot>
    <TaskSlot aria-label="Chrome profile S" $state="open"><ChromeLogo size={24} badge="S" badgeColor="#ef6c00" /></TaskSlot>
    <TaskSlot aria-label="Chrome profile D" $state="active"><ChromeLogo size={24} badge="D" badgeColor="#8d6e63" /></TaskSlot>
    <TaskSlot aria-label="Time tracker" $state="open">
      <svg width="22" height="22" viewBox="0 0 22 22" fill="none" stroke="#42a94a" strokeWidth="1.500">
        <circle cx="11" cy="11" r="10.500" fill="#f3f6f3" stroke="none" />
        <path d="M15.500 8.500A5.200 5.200 0 1 1 12.500 6.200M9 4H13M11 11.500 13.500 8.500M15 5 17 7" />
      </svg>
    </TaskSlot>
    <Tray>
      <Weather>
        <svg width="20" height="20" viewBox="0 0 20 20"><path d="M11 1A9.300 9.300 0 1 1 1 14 9 9 0 0 0 11 1z" fill="#fbc72e" /></svg>
        <span>22°C</span>
        <span>Clear</span>
      </Weather>
      <TrayIcons>
        <svg width="14" height="14" viewBox="0 0 14 14" fill="none" stroke="#fff" strokeWidth="1.200"><path d="M1 10 7 4 13 10" /></svg>
        <svg width="14" height="18" viewBox="0 0 14 18" fill="none" stroke="#fff" strokeWidth="1.200">
          <path d="M2 5.500H9V12.500H2zM9 8 12.500 6V12L9 10M3 3Q6 .5 9 3M3 15Q6 17.500 9 15" />
        </svg>
        <svg width="16" height="14" viewBox="0 0 16 14">
          <path d="M.5 2.500H13.500V10.500H.5zM14.500 5V8" fill="none" stroke="#fff" />
          <path d="M2 4H6V9H2z" fill="#fff" />
          <circle cx="11" cy="9" r="4.800" fill="#18a33c" />
          <path d="M11 6 13 9 11 12 9 9z" fill="none" stroke="#fff" />
        </svg>
        <svg width="14" height="14" viewBox="0 0 14 14" fill="none" stroke="#c9c9c9">
          <path d="M1 13Q1 2 13 1M4 13Q4 5 13 4.500M7 13Q7 8.500 13 8" />
          <circle cx="11.500" cy="12" r="1.300" fill="#fff" />
        </svg>
        <svg width="15" height="14" viewBox="0 0 15 14" fill="none" stroke="#fff" strokeWidth="1.100"><path d="M1 5H3L6 2V12L3 9H1zM9.500 4.500 14 9.500M14 4.500 9.500 9.500" /></svg>
        <span>ENG</span>
      </TrayIcons>
      <TrayClock>01:47 AM<br />19-02-2022</TrayClock>
      <Notice aria-label="Notifications">
        <svg width="18" height="18" viewBox="0 0 18 18"><path d="M1 1H17V13H7L4 16V13H1z" fill="#fff" /><path d="M4 4.500H14M4 7.500H14M4 10.500H10" stroke="#1d1d1d" /></svg>
        <NoticeCount>23</NoticeCount>
      </Notice>
      <ShowDesktop />
    </Tray>
  </Taskbar>
);

export default function App() {
  return (
    <Shell>
      <GlobalStyle />
      <OuterBrowser />
      <Stage>
        <Remote>
          <MacMenuBar />
          <MacWindow>
            <MacBrowserChrome />
            <Shop />
          </MacWindow>
          <DesktopStrip>
            <FileName>Certifica...Request</FileName>
            <FileName $selected>ningReq...Request</FileName>
          </DesktopStrip>
          <DockRow>
            <Dock>
              <DockGroup entries={dockLeft} />
              <DockRule />
              <DockGroup entries={dockMiddle} />
              <DockRule />
              <DockGroup entries={dockRight} />
            </Dock>
            <EdgePanel>
              <svg width="8" height="26" viewBox="0 0 8 26" stroke="#d9d9d6" strokeWidth="2"><path d="M1 0V26M6 0V26" /></svg>
            </EdgePanel>
          </DockRow>
        </Remote>
        <SideHandle aria-label="Session options">
          <svg width="14" height="18" viewBox="0 0 14 18" fill="none" stroke="currentColor" strokeWidth="2"><path d="M11 2 3 9 11 16M14 6 10 9 14 12" /></svg>
        </SideHandle>
      </Stage>
      <WindowsTaskbar />
    </Shell>
  );
}
